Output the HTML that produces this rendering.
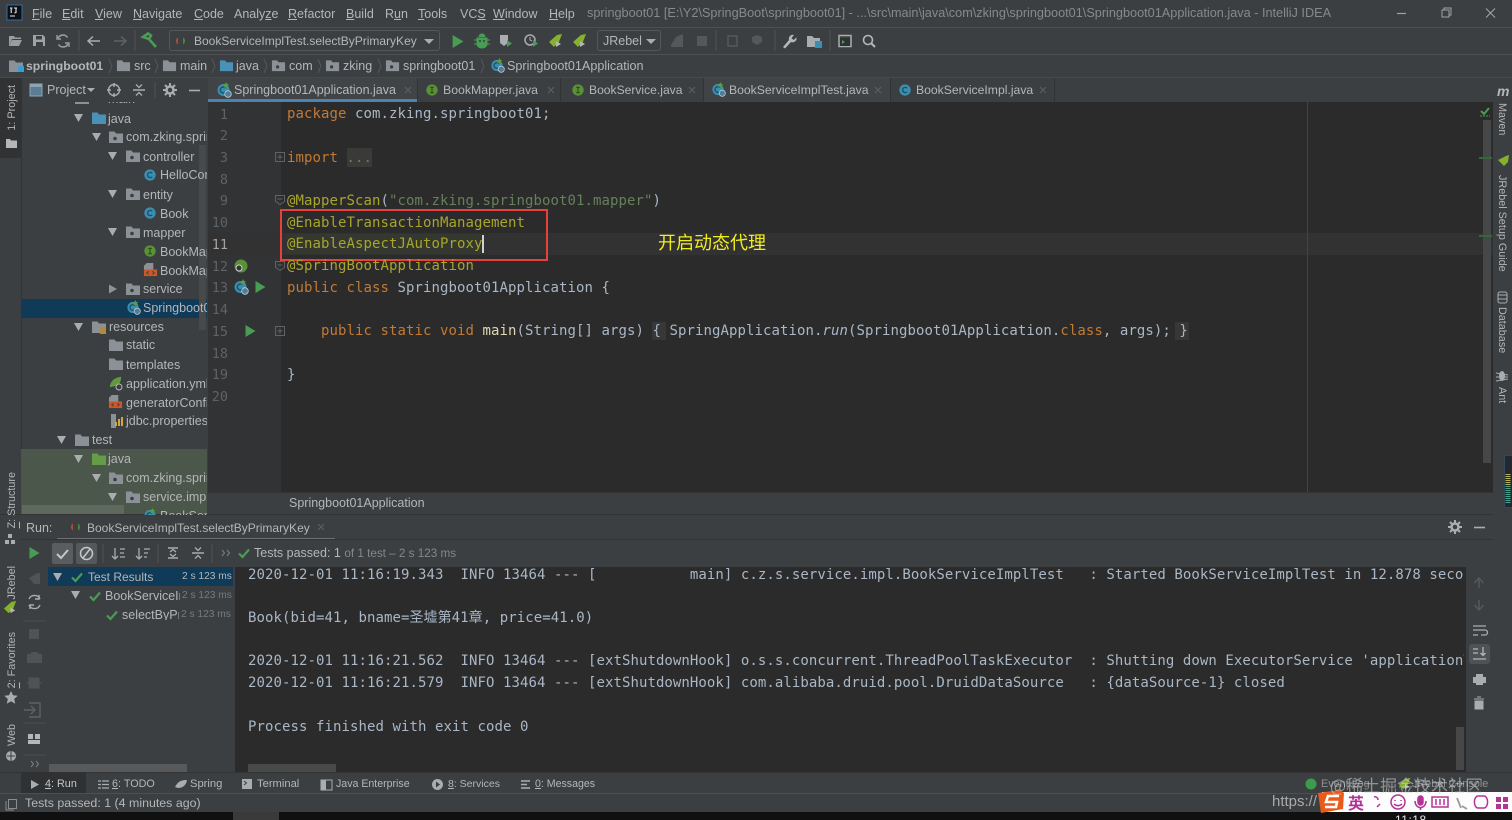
<!DOCTYPE html>
<html lang="en"><head><meta charset="utf-8"><title>IntelliJ IDEA</title>
<style>
html,body{margin:0;padding:0;background:#3c3f41}
#p{position:relative;width:1512px;height:820px;overflow:hidden;background:#3c3f41;font-family:"Liberation Sans","Noto Sans CJK SC",sans-serif;font-size:12.5px;color:#b4b6b8;filter:blur(.35px)}
.b{position:absolute}
.t{position:absolute;white-space:nowrap;line-height:16px;height:16px}
.m{position:absolute;white-space:pre;font-family:"DejaVu Sans Mono","Noto Sans CJK SC",monospace;font-size:14px;letter-spacing:.07px;line-height:20px;height:20px;color:#a9b7c6}
.a{color:#a8a52c}.k{color:#c27a35}.s{color:#66805a}.n{color:#5f6366;font-family:"DejaVu Sans Mono",monospace;font-size:13.5px;line-height:20px;position:absolute;text-align:right;width:24px;left:204px}
.v{position:absolute;writing-mode:vertical-rl;white-space:nowrap;line-height:14px;font-size:10.8px;color:#b4b6b8}
.r{transform:rotate(180deg)}
.g{color:#7d8083}.w{color:#85888b;font-size:11.7px}
.o{font-size:10.8px}
u{text-underline-offset:1px}
svg{position:absolute;left:0;top:0}
</style></head><body><div id="p">
<!-- panels -->
<div class="b" style="left:0;top:27px;width:1512px;height:1px;background:#4d4f51"></div>
<div class="b" style="left:0;top:54px;width:1512px;height:1px;background:#4d4f51"></div>
<div class="b" style="left:0;top:77px;width:1512px;height:1px;background:#48494b"></div>
<div class="b" style="left:0;top:78px;width:21px;height:80px;background:#303234"></div>
<div class="b" style="left:21px;top:78px;width:1px;height:437px;background:#333"></div>
<div class="b" style="left:208px;top:78px;width:1285px;height:24px;background:#3c3f41"></div>
<div class="b" style="left:208px;top:78px;width:209px;height:24px;background:#414446"></div>
<div class="b" style="left:703px;top:78px;width:187px;height:24px;background:#414446"></div>
<div class="b" style="left:208px;top:99px;width:209px;height:3px;background:#4a83b4"></div>
<div class="b" style="left:417px;top:78px;width:1px;height:24px;background:#333"></div>
<div class="b" style="left:560px;top:78px;width:1px;height:24px;background:#333"></div>
<div class="b" style="left:703px;top:78px;width:1px;height:24px;background:#333"></div>
<div class="b" style="left:890px;top:78px;width:1px;height:24px;background:#333"></div>
<div class="b" style="left:1054px;top:78px;width:1px;height:24px;background:#333"></div>
<!-- tree -->
<div class="b" style="left:21px;top:299px;width:186px;height:19px;background:#0f3a58"></div>
<div class="b" style="left:21px;top:449px;width:186px;height:66px;background:#4c574b"></div>
<div class="b" style="left:22px;top:505px;width:102px;height:9px;background:#5f6a5e"></div>
<div class="b" style="left:199px;top:145px;width:7px;height:185px;background:#48494b"></div>
<!-- editor -->
<div class="b" style="left:208px;top:102px;width:73px;height:390px;background:#313335"></div>
<div class="b" style="left:281px;top:102px;width:1212px;height:390px;background:#2b2b2b"></div>
<div class="b" style="left:281px;top:233px;width:1212px;height:22px;background:#323232"></div>
<div class="b" style="left:208px;top:233px;width:73px;height:22px;background:#323232"></div>
<div class="b" style="left:1307px;top:102px;width:1px;height:390px;background:#444"></div>
<div class="b" style="left:1483px;top:120px;width:8px;height:343px;background:#454749"></div>
<div class="b" style="left:1479px;top:157px;width:13px;height:2px;background:#2f6a38"></div>
<div class="b" style="left:1479px;top:235px;width:13px;height:2px;background:#2f6a38"></div>
<div class="b" style="left:287px;top:234px;width:194px;height:20px;background:#34382f"></div>
<div class="b" style="left:347px;top:148px;width:25px;height:19px;background:#3a3b38"></div>
<div class="b" style="left:652px;top:322px;width:14px;height:18px;background:#373737"></div>
<div class="b" style="left:1175px;top:322px;width:14px;height:18px;background:#373737"></div>
<div class="b" style="left:208px;top:492px;width:1285px;height:22px;background:#3c3f41;border-top:1px solid #333;box-sizing:border-box"></div>
<div class="b" style="left:0;top:514px;width:1493px;height:1px;background:#333"></div>
<div class="b" style="left:280px;top:209px;width:268px;height:52px;border:2px solid #e8403a;box-sizing:border-box"></div>
<div class="b" style="left:482px;top:235px;width:2px;height:18px;background:#d0d0d0"></div>
<!-- run -->
<div class="b" style="left:57px;top:538px;width:278px;height:2px;background:#6d6f71"></div>
<div class="b" style="left:21px;top:539px;width:1472px;height:1px;background:#333"></div>
<div class="b" style="left:52px;top:543px;width:21px;height:21px;background:#5a5d5f;border-radius:2px"></div>
<div class="b" style="left:76px;top:543px;width:21px;height:21px;background:#55585a;border-radius:2px"></div>
<div class="b" style="left:48px;top:567px;width:185px;height:19px;background:#0f3a58"></div>
<div class="b" style="left:235px;top:567px;width:1231px;height:205px;background:#2b2b2b"></div>
<div class="b" style="left:1456px;top:727px;width:8px;height:43px;background:#474747"></div>
<div class="b" style="left:248px;top:764px;width:88px;height:8px;background:#484a4a"></div>
<div class="b" style="left:49px;top:764px;width:138px;height:8px;background:#58595b"></div>
<div class="b" style="left:1469px;top:644px;width:21px;height:20px;background:#4f5254;border-radius:3px"></div>
<div class="b" style="left:0;top:772px;width:1512px;height:1px;background:#333"></div>
<div class="b" style="left:21px;top:772px;width:65px;height:21px;background:#2f3133"></div>
<div class="b" style="left:0;top:793px;width:1512px;height:1px;background:#4d4f51"></div>
<div class="b" style="left:0;top:812px;width:1512px;height:8px;background:#101010"></div>
<div class="b" style="left:233px;top:812px;width:46px;height:8px;background:#3a3a3a"></div>
<!-- combos -->
<div class="b" style="left:169px;top:30px;width:271px;height:21px;border:1px solid #55585a;border-radius:3px;box-sizing:border-box;background:#3c3f41"></div>
<div class="b" style="left:597px;top:30px;width:64px;height:21px;border:1px solid #55585a;border-radius:3px;box-sizing:border-box"></div>
<!-- icons -->
<svg width="1512" height="820" viewBox="0 0 1512 820">
<defs>
<symbol id="fo" viewBox="0 0 16 16"><path d="M1 2.500h5.500l1.500 2h7v9.500H1z" fill="#8b9196"/></symbol>
<symbol id="pk" viewBox="0 0 16 16"><path d="M1 2.500h5.500l1.500 2h7v9.500H1z" fill="#8b9196"/><circle cx="7" cy="9.500" r="1.800" fill="#3c3f41"/></symbol>
<symbol id="bf" viewBox="0 0 16 16"><path d="M1 2.500h5.500l1.500 2h7v9.500H1z" fill="#4a91b8"/></symbol>
<symbol id="gf" viewBox="0 0 16 16"><path d="M1 2.500h5.500l1.500 2h7v9.500H1z" fill="#659c46"/></symbol>
<symbol id="cc" viewBox="0 0 16 16"><circle cx="8" cy="8" r="6.500" fill="#3a8fb0"/><path d="M10.500 6A3 3 0 1 0 10.500 10" fill="none" stroke="#204f66" stroke-width="1.500"/></symbol>
<symbol id="ci" viewBox="0 0 16 16"><circle cx="8" cy="8" r="6.500" fill="#5a9136"/><path d="M6 5h4M8 5v6M6 11h4" stroke="#2d4f1c" stroke-width="1.300"/></symbol>
<symbol id="xm" viewBox="0 0 16 16"><path d="M4 1h7v7H1V4z" fill="#8b9196"/><rect x="1" y="8" width="14" height="7" fill="#c9592a"/><path d="M6 10l-2 1.500L6 13M10 10l2 1.500L10 13" fill="none" stroke="#3c3f41"/></symbol>
<symbol id="sb" viewBox="0 0 16 16"><circle cx="7.500" cy="8" r="6" fill="#3a8fb0"/><path d="M9.500 6A3 3 0 1 0 9.500 10" fill="none" stroke="#204f66" stroke-width="1.400"/><path d="M10 0l1 2 2 .5-1.500 1.500.5 2-2-1-2 1 .5-2L7 2.500 9 2z" fill="#5c9c46"/><circle cx="12" cy="12" r="3.300" fill="#4b7f9e" stroke="#c5ced4" stroke-width=".8"/></symbol>
<symbol id="da" viewBox="0 0 10 10"><path d="M0 1h9L4.500 9z" fill="#a9adb0"/></symbol>
<symbol id="ra" viewBox="0 0 10 10"><path d="M1 .5v9L9 5z" fill="#8f9396"/></symbol>
<symbol id="ok" viewBox="0 0 12 12"><path d="M1 6.500l3.500 3.500L11 2.500" fill="none" stroke="#499c54" stroke-width="2.200"/></symbol>
<symbol id="pl" viewBox="0 0 12 12"><path d="M1.500 0v12L11.500 6z" fill="#499c54"/></symbol>
<symbol id="jr" viewBox="0 0 16 16"><path d="M1 9l8-7 5-1-3 8-5 5z" fill="#86b12c"/><path d="M8 8l5 3-5 3z" fill="#b4b6b8"/></symbol>
<symbol id="ex" viewBox="0 0 16 16"><path d="M3 3h10M3 13h10" stroke="#a9adb0" stroke-width="1.500"/><path d="M5 7l3-2.500L11 7M5 9l3 2.500L11 9" fill="none" stroke="#a9adb0" stroke-width="1.300"/></symbol>
<symbol id="cl" viewBox="0 0 16 16"><path d="M2 8h12" stroke="#a9adb0" stroke-width="1.500"/><path d="M5 2.500l3 3 3-3M5 13.500l3-3 3 3" fill="none" stroke="#a9adb0" stroke-width="1.300"/></symbol>
<symbol id="ge" viewBox="0 0 16 16"><circle cx="8" cy="8" r="3.500" fill="none" stroke="#a9adb0" stroke-width="2.500"/><path d="M8 1v3M8 12v3M1 8h3M12 8h3M3 3l2 2M11 11l2 2M13 3l-2 2M5 11l-2 2" stroke="#a9adb0" stroke-width="2"/></symbol>
<symbol id="fb" viewBox="0 0 10 10"><rect x=".5" y=".5" width="9" height="9" fill="none" stroke="#5f6366"/><path d="M2.500 5h5M5 2.500v5" stroke="#5f6366"/></symbol>
<symbol id="fm" viewBox="0 0 10 10"><path d="M.5 .5h9v6L5 9.500.5 6.500z" fill="none" stroke="#5f6366"/><path d="M2.500 4h5" stroke="#5f6366"/></symbol>
<symbol id="sm" viewBox="0 0 16 16"><path d="M2 14C3 6 8 3 15 2c0 8-4 11-9 11z" fill="#5f9a40"/></symbol>
<clipPath id="cp"><rect x="21" y="102" width="186" height="413"/></clipPath>
</defs>
<!-- title -->
<rect x="7" y="5" width="15" height="15" fill="#0b1116" stroke="#2f6ea5"/><path d="M10 8h2.500M11.200 8v5M14 8h3M16 8v4.500l-1.500 .5M10 16h5" stroke="#e8e8e8" stroke-width="1.100" fill="none"/>
<path d="M1397 13.500h9" stroke="#a0a2a4" stroke-width="1.200"/><path d="M1442 10h7v7h-7zM1444 10V8h7v7h-2" fill="none" stroke="#a0a2a4"/><path d="M1486 8.500l9 9M1495 8.500l-9 9" stroke="#a0a2a4" stroke-width="1.100"/>
<!-- toolbar -->
<path d="M9 36h5l1 1.500h6V39H12l-3 7zM12 40h10l-3 6H9z" fill="#9a9da0"/>
<path d="M33 35h10l2 2v9H33z" fill="#a0a3a6"/><rect x="36" y="36" width="6" height="3.500" fill="#3c3f41"/><rect x="36" y="42" width="7" height="4" fill="#3c3f41"/>
<path d="M67.500 37.500A5.500 5.500 0 0 0 58 38M58.500 44.500A5.500 5.500 0 0 0 68 44" fill="none" stroke="#9a9da0" stroke-width="1.600"/><path d="M57 35v4h4M69 47v-4h-4" fill="none" stroke="#9a9da0" stroke-width="1.400"/>
<path d="M79 30v21" stroke="#4f5254"/><path d="M135 30v21" stroke="#4f5254"/><path d="M100 41H89M93 36.500l-5 4.500 5 4.500" fill="none" stroke="#a9adb0" stroke-width="1.500"/><path d="M114 41h11M121 36.500l5 4.500-5 4.500" fill="none" stroke="#5f6366" stroke-width="1.500"/>
<path d="M143 37l5-3.500 3 2 -2 3.500zM148 38l8 9" fill="none" stroke="#499c54" stroke-width="2.600"/>
<path d="M178 37.500a4 4 0 0 0 0 7z" fill="#a8502d"/><path d="M183 37.500a4 4 0 0 1 0 7z" fill="#4e7f45"/>
<path d="M424 39h10l-5 5z" fill="#a9adb0"/>
<use href="#pl" x="451" y="35" width="13" height="13"/>
<path d="M477 38h10v6a5 4 0 0 1-10 0zM479 37a3 3 0 0 1 6 0M474 40h16M474 44h16" fill="#499c54" stroke="#499c54"/><circle cx="480" cy="41" r="1" fill="#3c3f41"/><circle cx="484" cy="41" r="1" fill="#3c3f41"/>
<path d="M500 35h8v8l-4 3-4-3z" fill="#a9adb0"/><path d="M507 40l5 3.500-5 3.500z" fill="#499c54"/>
<circle cx="530" cy="40" r="5" fill="none" stroke="#a9adb0" stroke-width="1.500"/><path d="M530 37v3l2 1" stroke="#a9adb0" fill="none"/><path d="M533 40l5 3.500-5 3.500z" fill="#499c54"/>
<use href="#jr" x="548" y="33" width="16" height="16"/><use href="#jr" x="572" y="33" width="16" height="16"/>
<path d="M646 39h10l-5 5z" fill="#a9adb0"/>
<path d="M671 45l5-8 7-3v13h-12z" fill="#55585a"/><rect x="697" y="36" width="10" height="10" fill="#55585a"/>
<path d="M728 36h9v10h-9z" fill="none" stroke="#55585a" stroke-width="1.500"/><path d="M752 37l5-2 5 2v5l-5 3-5-3z" fill="#55585a"/>
<path d="M716 30v21M775 30v21M830 30v21" stroke="#4f5254"/>
<path d="M783 47l6-7a4 4 0 0 1 5-5l-2.500 3 2 2 3-2.500a4 4 0 0 1-5.500 4.500l-6 6.500z" fill="#b4b6b8"/>
<path d="M807 36h5l2 2h6v9h-13z" fill="#a9adb0"/><rect x="815" y="41" width="7" height="7" fill="#3a8fb0"/>
<rect x="839" y="35.500" width="12" height="11" fill="none" stroke="#a9adb0" stroke-width="1.500"/><rect x="840" y="38" width="10" height="8" fill="#2f3133"/><path d="M842 40l3 2-3 2z" fill="#499c54"/>
<circle cx="868" cy="40" r="4.500" fill="none" stroke="#b4b6b8" stroke-width="1.600"/><path d="M871.500 43.500l3.500 3.500" stroke="#b4b6b8" stroke-width="2"/>
<!-- breadcrumbs -->
<use href="#fo" x="8" y="58" width="16" height="16"/><rect x="18" y="66" width="6" height="6" fill="#35a0d8"/>
<use href="#fo" x="116" y="58" width="15" height="15"/><use href="#fo" x="162" y="58" width="15" height="15"/><use href="#bf" x="219" y="58" width="15" height="15"/><use href="#pk" x="271" y="58" width="15" height="15"/><use href="#pk" x="325" y="58" width="15" height="15"/><use href="#pk" x="385" y="58" width="15" height="15"/><use href="#sb" x="490" y="58" width="15" height="15"/>
<path d="M109 59l3 7-3 7M155 59l3 7-3 7M212 59l3 7-3 7M264 59l3 7-3 7M318 59l3 7-3 7M378 59l3 7-3 7M481 59l3 7-3 7" fill="none" stroke="#55585a"/>
<!-- project header -->
<rect x="30" y="84" width="12" height="12" fill="#5a7d95" stroke="#8ea5b5"/><rect x="30" y="84" width="12" height="3" fill="#8ea5b5"/>
<path d="M87 88h8l-4 4z" fill="#a9adb0"/>
<circle cx="114" cy="90" r="5.500" fill="none" stroke="#a9adb0" stroke-width="1.400"/><path d="M114 83v4M114 93v4M107 90h4M117 90h4" stroke="#a9adb0" stroke-width="1.400"/>
<use href="#cl" x="131" y="82" width="16" height="16"/><use href="#ge" x="162" y="82" width="16" height="16"/>
<path d="M189 90.500h11" stroke="#a9adb0" stroke-width="1.600"/><path d="M155 82v16" stroke="#4f5254"/>
<!-- tabs icons -->
<use href="#sb" x="216" y="82" width="16" height="16"/><use href="#ci" x="425" y="83" width="14" height="14"/><use href="#ci" x="571" y="83" width="14" height="14"/><use href="#sb" x="711" y="82" width="15" height="15"/><use href="#cc" x="898" y="83" width="14" height="14"/>
<path d="M405 87l6 6M411 87l-6 6M548 87l6 6M554 87l-6 6M689 87l6 6M695 87l-6 6M875 87l6 6M881 87l-6 6M1040 87l6 6M1046 87l-6 6" stroke="#5e6163"/>
<!-- left strip -->
<path d="M6 139h4l1 1.500h6V148H6z" fill="#b4b6b8"/>
<path d="M8 534h4v4H8zM5 540h4v4H5zM11 540h4v4h-4z" fill="#a9adb0"/>
<use href="#jr" x="3" y="600" width="15" height="15"/>
<path d="M11 691l2 4.300 4.700.5-3.500 3.200 1 4.700-4.200-2.500-4.200 2.500 1-4.700L4.300 695.800l4.700-.5z" fill="#a9adb0"/>
<circle cx="11" cy="756" r="5" fill="#a9adb0"/><path d="M7 756h8M11 751v10" stroke="#3c3f41"/>
<!-- right strip -->
<path d="M1498 160l8-4 3-1-1 7-4 4z" fill="#86b12c"/>
<rect x="1498" y="292" width="9" height="11" rx="2" fill="none" stroke="#a9adb0"/><path d="M1498 295h9M1498 299h9" stroke="#a9adb0"/>
<ellipse cx="1502" cy="376" rx="3" ry="5" fill="#a9adb0"/><path d="M1496 373l12 2M1496 377h12M1496 381l12-2" stroke="#a9adb0"/>
<rect x="1504.500" y="455.500" width="9" height="52" rx="2" fill="#22282e" stroke="#34495c"/><path d="M1508 474v12" stroke="#b8b45a" stroke-width="5" stroke-dasharray="1 1"/><path d="M1508 486v18" stroke="#4aa28a" stroke-width="5" stroke-dasharray="1 1"/>
<path d="M1481 111l3 3 5-6" fill="none" stroke="#499c54" stroke-width="2"/><path d="M1480 116h10" stroke="#499c54" stroke-dasharray="2 1"/>
<!-- tree icons -->
<g clip-path="url(#cp)">
<use href="#fo" x="74" y="90" width="16" height="16"/><use href="#da" x="74" y="113" width="10" height="10"/><use href="#bf" x="91" y="110" width="16" height="16"/>
<use href="#da" x="92" y="132" width="10" height="10"/><use href="#pk" x="108" y="129" width="16" height="16"/>
<use href="#da" x="108" y="151" width="10" height="10"/><use href="#pk" x="125" y="148" width="16" height="16"/>
<use href="#cc" x="143" y="168" width="14" height="14"/>
<use href="#da" x="108" y="189" width="10" height="10"/><use href="#pk" x="125" y="186" width="16" height="16"/>
<use href="#cc" x="143" y="206" width="14" height="14"/>
<use href="#da" x="108" y="227" width="10" height="10"/><use href="#pk" x="125" y="224" width="16" height="16"/>
<use href="#ci" x="143" y="244" width="14" height="14"/><use href="#xm" x="143" y="262" width="15" height="15"/>
<use href="#ra" x="108" y="284" width="10" height="10"/><use href="#pk" x="125" y="281" width="16" height="16"/>
<use href="#sb" x="126" y="300" width="15" height="15"/>
<use href="#da" x="74" y="322" width="10" height="10"/><use href="#fo" x="91" y="319" width="16" height="16"/><rect x="100" y="327" width="6" height="7" fill="#b48a3a"/>
<use href="#fo" x="108" y="337" width="16" height="16"/><use href="#fo" x="108" y="356" width="16" height="16"/>
<use href="#sm" x="108" y="375" width="14" height="14"/><circle cx="119" cy="387" r="3" fill="#3c3f41" stroke="#b4b6b8"/>
<use href="#xm" x="108" y="394" width="15" height="15"/>
<path d="M111 414h5v14h-5z" fill="#8b9196"/><path d="M116 426v-4M119 426v-7M122 426v-9" stroke="#d6a83b" stroke-width="2"/>
<use href="#da" x="57" y="435" width="10" height="10"/><use href="#fo" x="74" y="432" width="16" height="16"/>
<use href="#da" x="74" y="454" width="10" height="10"/><use href="#gf" x="91" y="451" width="16" height="16"/>
<use href="#da" x="92" y="473" width="10" height="10"/><use href="#pk" x="108" y="470" width="16" height="16"/>
<use href="#da" x="108" y="492" width="10" height="10"/><use href="#pk" x="125" y="489" width="16" height="16"/>
<use href="#sb" x="143" y="508" width="15" height="15"/>
</g>
<!-- gutter -->
<circle cx="241" cy="266" r="6.500" fill="#5a9136"/><circle cx="239" cy="268" r="3" fill="#313335" stroke="#c5ced4"/>
<use href="#sb" x="233" y="279" width="16" height="16"/>
<use href="#pl" x="254" y="281" width="12" height="12"/><use href="#pl" x="244" y="325" width="12" height="12"/>
<use href="#fb" x="275" y="152" width="10" height="10"/><use href="#fm" x="275" y="195" width="10" height="10"/><use href="#fm" x="275" y="261" width="10" height="10"/><use href="#fb" x="275" y="326" width="10" height="10"/>
<!-- run panel -->
<path d="M73 523.500a4 4 0 0 0 0 7z" fill="#a8502d"/><path d="M78 523.500a4 4 0 0 1 0 7z" fill="#4e7f45"/>
<path d="M318 524l6 6M324 524l-6 6" stroke="#5e6163"/>
<use href="#ge" x="1447" y="519" width="16" height="16"/><path d="M1474 527.500h11" stroke="#a9adb0" stroke-width="1.600"/>
<use href="#pl" x="28" y="547" width="12" height="12"/>
<path d="M29 578l8-5h3v11h-6z" fill="#505254"/>
<path d="M40 600a6 6 0 0 0-11 0M29 606a6 6 0 0 0 11 0M39 596v4h-4M30 610v-4h4" fill="none" stroke="#a9adb0" stroke-width="1.400" transform="translate(0 -1)"/>
<rect x="29" y="629" width="10" height="10" rx="1" fill="#505254"/>
<path d="M27 654h3l2-2h5l2 2h3v9H27z" fill="#505254"/><path d="M29 678h10v10h-10zM26 683h16" fill="#505254" stroke="#505254"/>
<path d="M29 703h11v14H29M24 710h10M31 706l4 4-4 4" fill="none" stroke="#5e6163" stroke-width="1.400"/>
<rect x="28" y="734" width="5" height="5" fill="#b4b6b8"/><rect x="35" y="734" width="5" height="5" fill="#b4b6b8"/><rect x="28" y="740" width="12" height="4" fill="#b4b6b8"/>
<path d="M31 761l2.500 3-2.500 3M36 761l2.500 3-2.500 3" fill="none" stroke="#7d8083"/>
<path d="M23 621h23M23 723h23M23 755h23" stroke="#4a4c4e"/>
<path d="M57 554l4 4 7-8" fill="none" stroke="#c5c7c9" stroke-width="2"/>
<circle cx="86.500" cy="553.500" r="6" fill="none" stroke="#c5c7c9" stroke-width="1.500"/><path d="M83 558l7-9" stroke="#c5c7c9" stroke-width="1.500"/>
<path d="M115 548v11M112 556l3 3 3-3M120 549h5M120 553h4M120 557h5" fill="none" stroke="#a9adb0" stroke-width="1.300"/>
<path d="M139 548v11M136 556l3 3 3-3M144 549h6M144 553h4M144 557h3" fill="none" stroke="#a9adb0" stroke-width="1.300"/>
<use href="#ex" x="165" y="545" width="16" height="16"/><use href="#cl" x="190" y="545" width="16" height="16"/>
<path d="M103 544v19M158 544v19M212 544v19" stroke="#4f5254"/>
<path d="M222 550l2.500 3-2.500 3M227 550l2.500 3-2.500 3" fill="none" stroke="#7d8083"/>
<use href="#ok" x="238" y="547" width="12" height="12"/>
<use href="#da" x="53" y="572" width="10" height="10"/><use href="#ok" x="71" y="571" width="12" height="12"/>
<use href="#da" x="71" y="590" width="10" height="10"/><use href="#ok" x="89" y="590" width="12" height="12"/><use href="#ok" x="106" y="609" width="12" height="12"/>
<!-- right run bar -->
<path d="M1479 578v10M1474.500 583l4.500-5 4.500 5" fill="none" stroke="#55585a" stroke-width="1.500"/><path d="M1479 600v10M1474.500 605l4.500 5 4.500-5" fill="none" stroke="#55585a" stroke-width="1.500"/>
<path d="M1473 626h13M1473 630h12a2.500 2.500 0 0 1 0 5h-4M1473 635h5" fill="none" stroke="#a9adb0" stroke-width="1.300"/>
<path d="M1473 649h5M1473 653h5M1473 659h13M1483 647v8M1480.500 653l2.500 2.500 2.500-2.500" fill="none" stroke="#b4b6b8" stroke-width="1.300"/>
<path d="M1476 674h7v3h3v6h-3v2h-7v-2h-3v-6h3z" fill="#a9adb0"/><path d="M1474 699h10M1475 701h8v8h-8zM1477 697h4" fill="#a9adb0" stroke="#a9adb0"/>
<!-- bottom -->
<path d="M31 780v9l8-4.500z" fill="#a9adb0"/>
<path d="M98 781h3M102 781h7M98 784.500h3M102 784.500h7M98 788h3M102 788h7" stroke="#a9adb0" stroke-width="1.200"/>
<path d="M175 787c3-6 7-7 12-7-1 6-5 8-9 8z" fill="#a9adb0"/>
<rect x="242" y="779" width="10" height="10" fill="#a9adb0"/><path d="M244 781l2.500 2-2.500 2" stroke="#3c3f41" fill="none"/>
<rect x="321" y="780" width="11" height="10" fill="none" stroke="#a9adb0"/><rect x="321" y="780" width="5" height="10" fill="#a9adb0"/>
<circle cx="437.500" cy="784.500" r="5.500" fill="#a9adb0"/><path d="M436 781.500l4 3-4 3z" fill="#3c3f41"/>
<path d="M521 781h9M521 784.500h6M521 788h9" stroke="#a9adb0" stroke-width="1.500"/>
<rect x="8.500" y="799.500" width="8" height="9" fill="none" stroke="#8a8d90"/><path d="M6 801v9h8" fill="none" stroke="#8a8d90"/>
<circle cx="1311" cy="784" r="5.500" fill="#3c9c4c"/>
<use href="#jr" x="1398" y="777" width="14" height="14"/>
<!-- IME -->
<rect x="1322" y="792" width="190" height="20" fill="#fdfdfd"/>
<path d="M1318 793l22-3 4 3-1 16-22 4z" fill="#ea5a1a"/>
<path d="M1339 796h-11l-2 6h11l-1 5h-11" fill="none" stroke="#fff" stroke-width="2.600"/>
<g fill="none" stroke="#b33496" stroke-width="1.500">
<path d="M1374 797a3 3 0 0 1 4 3M1380 804l-3 3"/>
<circle cx="1398" cy="802" r="7"/><path d="M1395 800v1M1401 800v1M1394 804a5 4 0 0 0 8 0"/>
<rect x="1418" y="796" width="5" height="9" rx="2.500" fill="#b33496"/><path d="M1415 801a5 6 0 0 0 11 0M1420.500 807v3"/>
<rect x="1432" y="797" width="16" height="10"/><path d="M1436 799v6M1440 799v6M1444 799v6"/>
<path d="M1478 796h6a3 5 0 0 1 0 12h-6a3 5 0 0 1 0-12z"/>
</g>
<path d="M1457 798l4 10M1462 806l5 3" fill="none" stroke="#9a9a9a" stroke-width="1.800"/>
<path d="M1496 797h5v5h-5zM1503 797h5v5h-5zM1496 804h5v5h-5zM1503 804h5v5h-5z" fill="#b33496"/>
</svg>

<!-- menu -->
<div class="t" style="left:32px;top:6px"><u>F</u>ile</div><div class="t" style="left:62px;top:6px"><u>E</u>dit</div><div class="t" style="left:95px;top:6px"><u>V</u>iew</div><div class="t" style="left:133px;top:6px"><u>N</u>avigate</div><div class="t" style="left:194px;top:6px"><u>C</u>ode</div><div class="t" style="left:234px;top:6px">Analy<u>z</u>e</div><div class="t" style="left:288px;top:6px"><u>R</u>efactor</div><div class="t" style="left:346px;top:6px"><u>B</u>uild</div><div class="t" style="left:385px;top:6px">R<u>u</u>n</div><div class="t" style="left:418px;top:6px"><u>T</u>ools</div><div class="t" style="left:460px;top:6px">VC<u>S</u></div><div class="t" style="left:493px;top:6px"><u>W</u>indow</div><div class="t" style="left:549px;top:6px"><u>H</u>elp</div>
<div class="t" style="left:587px;top:5px;color:#87898b;font-size:12.7px">springboot01 [E:\Y2\SpringBoot\springboot01] - ...\src\main\java\com\zking\springboot01\Springboot01Application.java - IntelliJ IDEA</div>
<div class="t" style="left:194px;top:33px;font-size:12px">BookServiceImplTest.selectByPrimaryKey</div><div class="t" style="left:603px;top:33px">JRebel</div>
<!-- breadcrumb -->
<div class="t" style="left:26px;top:58px;font-weight:bold;font-size:12.2px">springboot01</div><div class="t" style="left:134px;top:58px">src</div><div class="t" style="left:180px;top:58px">main</div><div class="t" style="left:236px;top:58px">java</div><div class="t" style="left:289px;top:58px">com</div><div class="t" style="left:343px;top:58px">zking</div><div class="t" style="left:403px;top:58px">springboot01</div><div class="t" style="left:507px;top:58px;font-size:12.6px">Springboot01Application</div>
<!-- project hdr + tabs -->
<div class="t" style="left:47px;top:82px">Project</div>
<div class="t" style="left:234px;top:82px">Springboot01Application.java</div><div class="t" style="left:443px;top:82px;font-size:12.3px">BookMapper.java</div><div class="t" style="left:589px;top:82px;font-size:12.1px">BookService.java</div><div class="t" style="left:729px;top:82px;font-size:12.2px">BookServiceImplTest.java</div><div class="t" style="left:916px;top:82px;font-size:12.2px">BookServiceImpl.java</div>
<!-- tree text -->
<div class="b" style="left:0;top:0;width:1512px;height:820px;clip-path:inset(102px 1305px 305px 21px)">
<div class="t" style="left:108px;top:91px">main</div>
<div class="t" style="left:108px;top:111px">java</div>
<div class="t" style="left:126px;top:129px">com.zking.springboot01</div>
<div class="t" style="left:143px;top:149px">controller</div>
<div class="t" style="left:160px;top:167px">HelloController</div>
<div class="t" style="left:143px;top:187px">entity</div>
<div class="t" style="left:160px;top:206px">Book</div>
<div class="t" style="left:143px;top:225px">mapper</div>
<div class="t" style="left:160px;top:244px">BookMapper</div>
<div class="t" style="left:160px;top:263px">BookMapper.xml</div>
<div class="t" style="left:143px;top:281px">service</div>
<div class="t" style="left:143px;top:300px">Springboot01Application</div>
<div class="t" style="left:109px;top:319px">resources</div>
<div class="t" style="left:126px;top:337px">static</div>
<div class="t" style="left:126px;top:357px">templates</div>
<div class="t" style="left:126px;top:376px">application.yml</div>
<div class="t" style="left:126px;top:395px">generatorConfig.xml</div>
<div class="t" style="left:126px;top:413px">jdbc.properties</div>
<div class="t" style="left:92px;top:432px">test</div>
<div class="t" style="left:108px;top:451px">java</div>
<div class="t" style="left:126px;top:470px">com.zking.springboot01</div>
<div class="t" style="left:143px;top:489px">service.impl</div>
<div class="t" style="left:160px;top:508px">BookServiceImplTest</div>
</div>
<!-- line numbers -->
<div class="n" style="top:105px">1</div><div class="n" style="top:126px">2</div><div class="n" style="top:148px">3</div><div class="n" style="top:170px">8</div><div class="n" style="top:191px">9</div><div class="n" style="top:213px">10</div><div class="n" style="top:235px;color:#a4a3a3">11</div><div class="n" style="top:257px">12</div><div class="n" style="top:278px">13</div><div class="n" style="top:300px">14</div><div class="n" style="top:322px">15</div><div class="n" style="top:344px">18</div><div class="n" style="top:365px">19</div><div class="n" style="top:387px">20</div>
<!-- code -->
<div class="m" style="left:287px;top:104px"><span class="k">package</span> com.zking.springboot01;</div>
<div class="m" style="left:287px;top:148px"><span class="k">import</span> <span class="s">...</span></div>
<div class="m" style="left:287px;top:191px"><span class="a">@MapperScan</span>(<span class="s">"com.zking.springboot01.mapper"</span>)</div>
<div class="m" style="left:287px;top:213px"><span class="a">@EnableTransactionManagement</span></div>
<div class="m" style="left:287px;top:234px"><span class="a">@EnableAspectJAutoProxy</span></div>
<div class="m" style="left:287px;top:256px"><span class="a">@SpringBootApplication</span></div>
<div class="m" style="left:287px;top:278px"><span class="k">public class</span> Springboot01Application {</div>
<div class="m" style="left:287px;top:321px">    <span class="k">public static void</span> <span style="color:#e0d6b4">main</span>(String[] args) { SpringApplication.<i>run</i>(Springboot01Application.<span class="k">class</span>, args); }</div>
<div class="m" style="left:287px;top:365px">}</div>
<div class="t" style="left:658px;top:231px;height:22px;line-height:22px;font-size:18px;color:#f2ee1e;font-family:'Noto Sans CJK SC',sans-serif">开启动态代理</div>
<div class="t" style="left:289px;top:495px">Springboot01Application</div>
<!-- left/right strip text -->
<div class="v r" style="left:5px;top:85px">1: Project</div>
<div class="v r" style="left:5px;top:472px"><u>Z</u>: Structure</div>
<div class="v r" style="left:5px;top:566px">JRebel</div>
<div class="v r" style="left:5px;top:632px"><u>2</u>: Favorites</div>
<div class="v r" style="left:5px;top:724px">Web</div>
<div class="t" style="left:1497px;top:83px;font-weight:bold;font-style:italic;font-size:14px">m</div>
<div class="v" style="left:1495px;top:103px">Maven</div>
<div class="v" style="left:1495px;top:175px">JRebel Setup Guide</div>
<div class="v" style="left:1495px;top:307px">Database</div>
<div class="v" style="left:1495px;top:387px">Ant</div>
<!-- run text -->
<div class="t" style="left:26px;top:520px">Run:</div><div class="t" style="left:87px;top:520px;font-size:12px">BookServiceImplTest.selectByPrimaryKey</div>
<div class="t" style="left:254px;top:545px">Tests passed: 1 <span class="w">of 1 test – 2 s 123 ms</span></div>
<div class="t" style="left:88px;top:569px;font-size:12px">Test Results</div><div class="t" style="left:182px;top:569px;font-size:10.2px">2 s 123 ms</div>
<div class="b" style="left:0;top:0;width:1512px;height:820px;clip-path:inset(560px 1332px 200px 48px)"><div class="t" style="left:105px;top:588px">BookServiceImplTest</div></div>
<div class="t" style="left:181px;top:588px;font-size:10.2px;color:#787a7d;background:#3c3f41;padding-left:1px">2 s 123 ms</div>
<div class="b" style="left:0;top:0;width:1512px;height:820px;clip-path:inset(560px 1333px 200px 48px)"><div class="t" style="left:122px;top:607px">selectByPrimaryKey</div></div>
<div class="t" style="left:180px;top:607px;font-size:10.2px;color:#787a7d;background:#3c3f41;padding-left:1px">2 s 123 ms</div>
<!-- console -->
<div class="b" style="left:0;top:0;width:1512px;height:820px;clip-path:inset(560px 48px 40px 240px)">
<div class="m" style="left:248px;top:565px">2020-12-01 11:16:19.343  INFO 13464 --- [           main] c.z.s.service.impl.BookServiceImplTest   : Started BookServiceImplTest in 12.878 seconds</div>
<div class="m" style="left:248px;top:608px">Book(bid=41, bname=圣墟第41章, price=41.0)</div>
<div class="m" style="left:248px;top:651px">2020-12-01 11:16:21.562  INFO 13464 --- [extShutdownHook] o.s.s.concurrent.ThreadPoolTaskExecutor  : Shutting down ExecutorService 'applicationTaskExecutor'</div>
<div class="m" style="left:248px;top:673px">2020-12-01 11:16:21.579  INFO 13464 --- [extShutdownHook] com.alibaba.druid.pool.DruidDataSource   : {dataSource-1} closed</div>
<div class="m" style="left:248px;top:717px">Process finished with exit code 0</div>
</div>
<!-- bottom bar -->
<div class="t o" style="left:45px;top:776px;color:#c5c7c9"><u>4</u>: Run</div><div class="t o" style="left:112px;top:776px"><u>6</u>: TODO</div><div class="t o" style="left:190px;top:776px;font-size:11.2px">Spring</div><div class="t o" style="left:257px;top:776px;font-size:11.2px">Terminal</div><div class="t o" style="left:336px;top:776px;font-size:10.6px">Java Enterprise</div><div class="t o" style="left:448px;top:776px;font-size:10.5px"><u>8</u>: Services</div><div class="t o" style="left:535px;top:776px;font-size:10.6px"><u>0</u>: Messages</div>
<div class="t" style="left:25px;top:795px;font-size:12.4px">Tests passed: 1 (4 minutes ago)</div>
<div class="t o" style="left:1321px;top:776px;color:#8f9193">Event Log</div><div class="t o" style="left:1412px;top:776px;color:#8f9193">JRebel Console</div>
<div class="t" style="left:1330px;top:775px;font-size:17px;height:20px;line-height:20px;color:rgba(215,215,215,.55);font-family:'Noto Sans CJK SC',sans-serif">@稀土掘金技术社区</div>
<div class="t" style="left:1272px;top:794px;font-size:15px;color:#aaa">https://</div>
<div class="t" style="left:1348px;top:794px;font-size:16px;color:#b33496;font-weight:bold;font-family:'Noto Sans CJK SC',sans-serif">英</div>
<div class="t" style="left:1395px;top:812px;font-size:12px;color:#e8e8e8;letter-spacing:.5px">11:18</div>
</div></body></html>
